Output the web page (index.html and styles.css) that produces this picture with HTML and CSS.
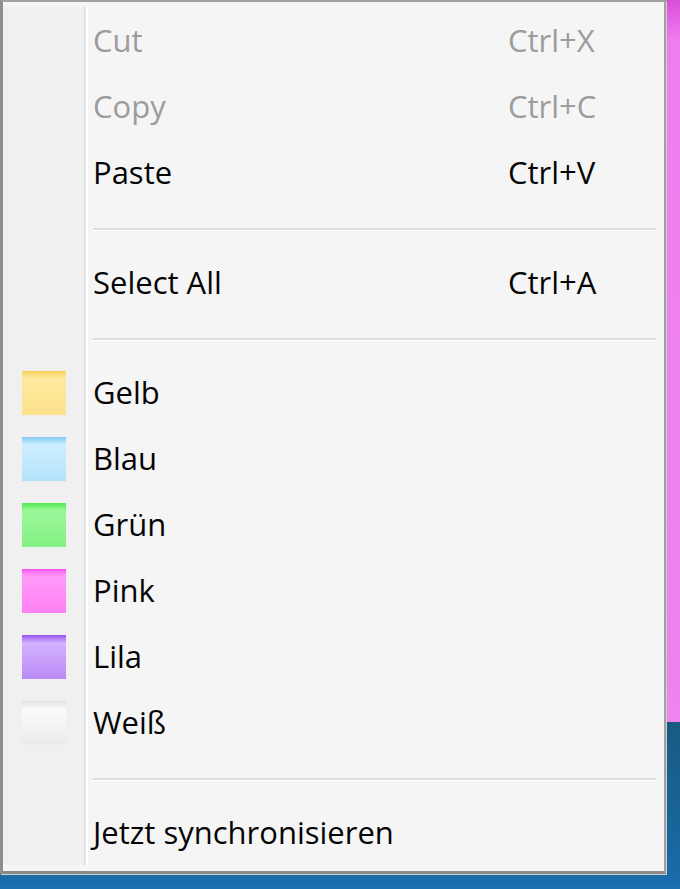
FILE: index.html
```html
<!DOCTYPE html>
<html lang="de">
<head>
<meta charset="utf-8">
<title>Kontextmenü</title>
<link rel="stylesheet" href="styles.css">
</head>
<body>
<div class="menu">
  <div class="item disabled"><span class="icon"></span><span class="label">Cut</span><span class="key">Ctrl+X</span></div>
  <div class="item disabled"><span class="icon"></span><span class="label">Copy</span><span class="key">Ctrl+C</span></div>
  <div class="item"><span class="icon"></span><span class="label">Paste</span><span class="key">Ctrl+V</span></div>
  <div class="sep"><span class="icon"></span><span class="line"></span></div>
  <div class="item"><span class="icon"></span><span class="label">Select All</span><span class="key">Ctrl+A</span></div>
  <div class="sep"><span class="icon"></span><span class="line"></span></div>
  <div class="item"><span class="icon"><i class="sw gelb"></i></span><span class="label">Gelb</span></div>
  <div class="item"><span class="icon"><i class="sw blau"></i></span><span class="label">Blau</span></div>
  <div class="item"><span class="icon"><i class="sw gruen"></i></span><span class="label">Grün</span></div>
  <div class="item"><span class="icon"><i class="sw pink"></i></span><span class="label">Pink</span></div>
  <div class="item"><span class="icon"><i class="sw lila"></i></span><span class="label">Lila</span></div>
  <div class="item"><span class="icon"><i class="sw weiss"></i></span><span class="label">Weiß</span></div>
  <div class="sep"><span class="icon"></span><span class="line"></span></div>
  <div class="item"><span class="icon"></span><span class="label">Jetzt synchronisieren</span></div>
</div>
</body>
</html>
```
FILE: styles.css
```css
html, body {
  margin: 0;
  padding: 0;
}
body {
  width: 680px;
  height: 889px;
  overflow: hidden;
  background: linear-gradient(to bottom, #d94fd8 0, #f07df0 40px, #ee84ee 722px, #175b82 722px, #1a6aa6 875px, #1c6fb3 889px);
  font-family: "Open Sans", "Noto Sans", sans-serif;
}
.menu {
  width: 666px;
  box-sizing: border-box;
  background: #f5f5f5;
  border: 2px solid #a0a0a0;
  border-left: 3px solid #8e8e8e;
  border-bottom: 3px solid #8a8a8a;
  padding: 5px 0 6px 0;
  box-shadow: 1px 1px 0 #d0d0d0;
}
.item, .sep {
  display: flex;
  align-items: center;
}
.item {
  height: 66px;
  font-size: 31px;
  color: #050505;
}
.item.disabled {
  color: #9c9c9c;
}
.sep {
  height: 44px;
}
.sep .line {
  margin-top: 4px;
}
.icon {
  width: 83px;
  align-self: stretch;
  flex: none;
  display: flex;
  align-items: center;
  padding-left: 19px;
  box-sizing: border-box;
  background: #f0f0f0;
  border-right: 2px solid #e3e3e3;
  box-shadow: 2px 0 0 #ffffff;
  margin-right: 6px;
}
.label {
  width: 415px;
  flex: none;
  margin-left: 1px;
  white-space: nowrap;
}
.key {
  white-space: nowrap;
}
.line {
  flex: none;
  width: 563px;
  height: 2px;
  background: #dcdcdc;
  border-bottom: 1px solid #ffffff;
  margin-left: 1px;
}
.sw {
  display: block;
  width: 44px;
  height: 44px;
  box-sizing: border-box;
  margin-top: 2px;
}
.gelb {
  background: linear-gradient(to bottom, #f7cf52 0, #fbdf80 4px, #fde9a0 8px, #fce18a);
}
.blau {
  background: linear-gradient(to bottom, #86c9f0 0, #a9dcf8 4px, #cdeeff 8px, #b4e2fb);
}
.gruen {
  background: linear-gradient(to bottom, #4ee84e 0, #79f279 4px, #9af89a 8px, #84f184);
}
.pink {
  background: linear-gradient(to bottom, #f54ff0 0, #fb80f5 4px, #ff9af8 8px, #ff80f2);
}
.lila {
  background: linear-gradient(to bottom, #9452ee 0, #b385f8 4px, #d4b2ff 8px, #b98af6);
}
.weiss {
  background: linear-gradient(to bottom, #e2e2e2 0, #eeeeee 4px, #fbfbfb 8px, #ebebeb);
}
```
